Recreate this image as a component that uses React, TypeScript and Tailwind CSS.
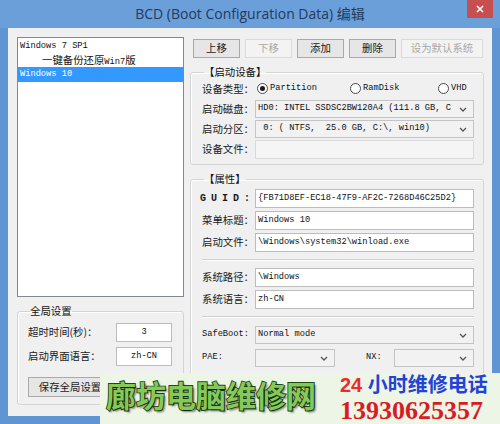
import type { ReactNode } from 'react';

const cjk = "font-['Noto_Sans_CJK_SC','Liberation_Sans',sans-serif]";
const mono = "font-['Liberation_Mono','Noto_Sans_CJK_SC',monospace]";

function Chevron() {
    return (
        <svg width="8" height="5" viewBox="0 0 8 5" className="shrink-0">
            <path d="M1 1l3 3 3-3" fill="none" stroke="#555" strokeWidth="1.3" />
        </svg>
    );
}

function Button({ label, disabled, className }: { label: string; disabled?: boolean; className: string }) {
    return (
        <div
            className={`flex h-[19px] items-center justify-center border text-[10.4px] leading-none ${cjk} ${
                disabled ? 'border-[#dadada] bg-[#f3f3f3] text-[#a8a8a8]' : 'border-[#a9a9a9] bg-[#e6e6e6] text-[#1a1a1a]'
            } ${className}`}
        >
            {label}
        </div>
    );
}

function TextBox({ value, className = '', center, disabled }: { value?: string; className?: string; center?: boolean; disabled?: boolean }) {
    return (
        <div
            className={`flex h-[19px] items-center border px-[2px] ${mono} text-[8.7px] whitespace-pre text-[#111] ${
                center ? 'justify-center' : ''
            } ${disabled ? 'border-[#d9d9d9] bg-[#f5f5f5]' : 'border-[#bcbcbc] bg-white'} ${className}`}
        >
            {value}
        </div>
    );
}

function Combo({ value = '', className = '' }: { value?: string; className?: string }) {
    return (
        <div className={`flex h-[18px] items-center justify-between border border-[#c4c4c4] bg-[#f2f2f2] pl-[2px] pr-[6px] ${className}`}>
            <span className={`${mono} overflow-hidden text-[8.7px] whitespace-pre text-[#111]`}>{value}</span>
            <Chevron />
        </div>
    );
}

function Label({ children, className = 'w-[53px]' }: { children: ReactNode; className?: string }) {
    return <div className={`${cjk} shrink-0 text-[10.4px] leading-none text-[#1a1a1a] ${className}`}>{children}</div>;
}

function Radio({ label, checked, className }: { label: string; checked?: boolean; className: string }) {
    return (
        <div className={`flex items-center gap-[2px] ${className}`}>
            <div className="flex h-[11px] w-[11px] items-center justify-center rounded-full border border-[#4a4a4a] bg-white">
                {checked && <div className="h-[5px] w-[5px] rounded-full bg-[#1a1a1a]" />}
            </div>
            <span className={`${mono} text-[8.7px] text-[#111]`}>{label}</span>
        </div>
    );
}

function Group({ title, className, children }: { title: string; className: string; children: ReactNode }) {
    return (
        <fieldset className={`rounded-[3px] border border-[#d4d4d4] shadow-[inset_1px_1px_0_#fff] ${className}`}>
            <legend className={`${cjk} ml-[2px] text-[10.4px] leading-[14px] text-[#111]`}>{title}</legend>
            {children}
        </fieldset>
    );
}

function Separator() {
    return (
        <div className="h-[10px] pt-[4px]">
            <div className="border-t border-b border-t-[#cfcfcf] border-b-white" />
        </div>
    );
}

export default function App() {
    return (
        <div className="relative flex h-[424px] w-[500px] flex-col overflow-hidden bg-[#5f95d3]">
            {/* Title bar */}
            <div className="grid h-[28px] grid-cols-[1fr_auto_1fr] bg-[#6b9fda]">
                <div />
                <div className="pt-[4px] font-['Open_Sans','Noto_Sans_CJK_SC',sans-serif] text-[14px] leading-[20px] text-[#243a5c]">
                    BCD (Boot Configuration Data) 编辑
                </div>
                <div className="flex justify-end pr-[7px]">
                    <div className="flex h-[18px] w-[26px] items-center justify-center bg-[#c74f4f]">
                        <svg width="8" height="8" viewBox="0 0 8 8">
                            <path d="M1 1l6 6M7 1l-6 6" stroke="#fff" strokeWidth="1.6" />
                        </svg>
                    </div>
                </div>
            </div>

            {/* Client area */}
            <div className="mx-[8px] flex h-[388px] gap-[6px] bg-[#f0f0f0] pt-[9px] pl-[9px]">
                {/* Left column */}
                <div className="flex w-[167px] flex-col">
                    <div className="h-[260px] border border-[#828790] bg-white pt-[1px]">
                        <div className={`${mono} h-[14px] pl-[2px] text-[8.7px] leading-[14px] text-[#111]`}>Windows 7 SP1</div>
                        <div className={`${cjk} h-[14px] pl-[24px] text-[10.4px] leading-[14px] text-[#111]`}>
                            一键备份还原<span className={`${mono} text-[8.7px]`}>Win7</span>版
                        </div>
                        <div className={`${mono} h-[15px] bg-[#3399ff] pl-[2px] text-[8.7px] leading-[15px] text-white`}>Windows 10</div>
                    </div>

                    <Group title="全局设置" className="mt-[7px] h-[101px] pr-[10px] pl-[10px]">
                        <div className="flex flex-col pt-[5px]">
                            <div className="flex h-[19px] items-center">
                                <Label className="w-[88px]">超时时间(秒)：</Label>
                                <TextBox value="3" center className="w-[56px]" />
                            </div>
                            <div className="mt-[5px] flex h-[19px] items-center">
                                <Label className="w-[88px]">启动界面语言：</Label>
                                <TextBox value="zh-CN" center className="w-[56px]" />
                            </div>
                            <Button label="保存全局设置" className="mt-[11px] h-[20px] w-[84px]" />
                        </div>
                    </Group>
                </div>

                {/* Right column */}
                <div className="flex w-[294px] flex-col">
                    <div className="mt-[2px] flex gap-[5px] pl-[3px]">
                        <Button label="上移" className="w-[47px]" />
                        <Button label="下移" disabled className="w-[47px]" />
                        <Button label="添加" className="w-[47px]" />
                        <Button label="删除" className="w-[47px]" />
                        <Button label="设为默认系统" disabled className="w-[82px]" />
                    </div>

                    <Group title="【启动设备】" className="mt-[7px] pr-[9px] pb-[6px] pl-[11px]">
                        <div className="flex flex-col gap-[2px] pt-[1px]">
                            <div className="flex h-[18px] items-center">
                                <Label>设备类型：</Label>
                                <Radio label="Partition" checked className="w-[95px] pl-[2px]" />
                                <Radio label="RamDisk" className="w-[88px]" />
                                <Radio label="VHD" className="w-[36px]" />
                            </div>
                            <div className="flex h-[18px] items-center">
                                <Label>启动磁盘：</Label>
                                <Combo value="HD0: INTEL SSDSC2BW120A4 (111.8 GB, C" className="w-[219px]" />
                            </div>
                            <div className="flex h-[18px] items-center">
                                <Label>启动分区：</Label>
                                <Combo value=" 0: ( NTFS,  25.0 GB, C:\, win10)" className="w-[219px]" />
                            </div>
                            <div className="flex h-[18px] items-center">
                                <Label>设备文件：</Label>
                                <TextBox disabled className="h-[18px] w-[219px]" />
                            </div>
                        </div>
                    </Group>

                    <Group title="【属性】" className="mt-[7px] mb-[10px] flex-1 pr-[9px] pl-[11px]">
                        <div className="flex flex-col gap-[3px] pt-[3px]">
                            <div className="flex h-[19px] items-center">
                                <div className={`${mono} w-[53px] shrink-0 -ml-[2px] pl-0 text-[10px] font-bold tracking-[5px] text-[#1a1a1a]`}>GUID:</div>
                                <TextBox value="{FB71D8EF-EC18-47F9-AF2C-7268D46C25D2}" className="ml-[2px] w-[219px]" />
                            </div>
                            <div className="flex h-[19px] items-center">
                                <Label>菜单标题：</Label>
                                <TextBox value="Windows 10" className="w-[219px]" />
                            </div>
                            <div className="flex h-[19px] items-center">
                                <Label>启动文件：</Label>
                                <TextBox value="\Windows\system32\winload.exe" className="w-[219px]" />
                            </div>
                            <Separator />
                            <div className="flex h-[19px] items-center">
                                <Label>系统路径：</Label>
                                <TextBox value="\Windows" className="w-[219px]" />
                            </div>
                            <div className="flex h-[19px] items-center">
                                <Label>系统语言：</Label>
                                <TextBox value="zh-CN" className="w-[219px]" />
                            </div>
                            <Separator />
                            <div className="flex h-[20px] items-center">
                                <div className={`${mono} w-[53px] shrink-0 text-[8.7px] text-[#111]`}>SafeBoot:</div>
                                <Combo value="Normal mode" className="w-[219px]" />
                            </div>
                            <div className="flex h-[20px] items-center">
                                <div className={`${mono} w-[53px] shrink-0 text-[8.7px] text-[#111]`}>PAE:</div>
                                <Combo className="w-[80px]" />
                                <div className={`${mono} ml-[31px] w-[28px] shrink-0 text-[8.7px] text-[#111]`}>NX:</div>
                                <Combo className="w-[80px]" />
                            </div>
                        </div>
                    </Group>
                </div>
            </div>

            {/* Watermark banner laid over the window */}
            <div className="absolute top-[373px] left-[100px] flex h-[51px] w-[400px] items-start bg-[#edf5e6]">
                <div
                    className={`${cjk} mt-[5px] ml-[6px] w-[234px] text-[30px] leading-[32px] font-bold text-[#84c95a] [-webkit-text-stroke:1.8px_#1e4a10] [paint-order:stroke_fill] [text-shadow:2px_2px_2px_rgba(0,0,0,0.45)]`}
                >
                    廊坊电脑维修网
                </div>
                <div className="mt-[2px] flex flex-col">
                    <div className="font-['Liberation_Sans','Noto_Sans_CJK_SC',sans-serif] text-[20px] leading-[20px] font-bold text-[#2342d6]">
                        <span className="text-[#ec2b2b]">24</span> 小时维修电话
                    </div>
                    <div className="mt-[3px] font-['Liberation_Serif',serif] text-[26px] leading-[26px] font-bold text-[#d91c24]">13930625357</div>
                </div>
            </div>
        </div>
    );
}
